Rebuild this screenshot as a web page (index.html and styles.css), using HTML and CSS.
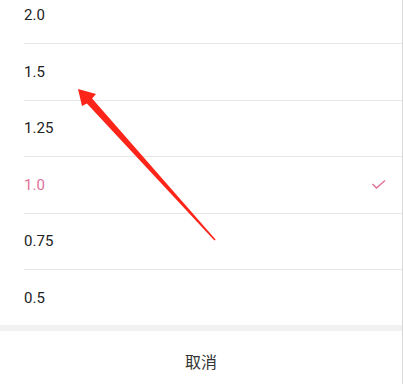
FILE: index.html
```html
<!DOCTYPE html>
<html lang="zh">
<head>
<meta charset="utf-8">
<title>播放速度</title>
<link rel="stylesheet" href="styles.css">
</head>
<body>
<div class="sheet">
  <div class="list-viewport">
    <ul class="list">
      <li class="row"><span class="label">2.0</span></li>
      <li class="row"><span class="label">1.5</span></li>
      <li class="row"><span class="label">1.25</span></li>
      <li class="row selected"><span class="label">1.0</span>
        <svg class="check" width="16" height="12" viewBox="0 0 16 12"><polyline points="1.5,5 5.5,9 14,1.5" fill="none" stroke="#e0709a" stroke-width="1.4"/></svg>
      </li>
      <li class="row"><span class="label">0.75</span></li>
      <li class="row last"><span class="label">0.5</span></li>
    </ul>
  </div>
  <div class="gap"></div>
  <div class="cancel">取消</div>
</div>
<svg class="annotation" width="404" height="384" viewBox="0 0 404 384">
  <polygon points="78,89 96,94 92.1,98.6 215.6,239.6 214.4,240.4 86.9,103.4 82,106" fill="#fd2419"/>
</svg>
</body>
</html>
```
FILE: styles.css
```css
html, body {
  margin: 0;
  padding: 0;
  background: #ffffff;
  overflow: hidden;
}
body {
  width: 404px;
  height: 384px;
  position: relative;
  font-family: Roboto, "Noto Sans", "Noto Sans CJK SC", sans-serif;
}
.sheet {
  width: 402px;
  height: 384px;
  border-right: 1px solid #dadada;
  display: flex;
  flex-direction: column;
  background: #ffffff;
}
.list-viewport {
  height: 325px;
  overflow: hidden;
  flex: none;
}
.list {
  list-style: none;
  margin: -12.5px 0 0 0;
  padding: 0;
}
.row {
  margin-left: 24px;
  height: 55.5px;
  border-bottom: 1px solid #e6e6e6;
  display: flex;
  align-items: center;
  justify-content: space-between;
  padding-right: 15px;
  box-sizing: content-box;
}
.row.last {
  border-bottom: none;
  height: 55px;
}
.label {
  font-size: 15px;
  color: #222222;
  letter-spacing: 0.1px;
}
.selected .label {
  color: #e0709a;
}
.check {
  display: block;
  margin-top: 1px;
}
.gap {
  height: 6px;
  background: #f1f1f1;
  flex: none;
}
.cancel {
  height: 60px;
  flex: none;
  display: flex;
  align-items: center;
  justify-content: center;
  font-family: "Noto Sans CJK SC", sans-serif;
  font-size: 16px;
  color: #333333;
}
.annotation {
  position: absolute;
  left: 0;
  top: 0;
  pointer-events: none;
}
```
